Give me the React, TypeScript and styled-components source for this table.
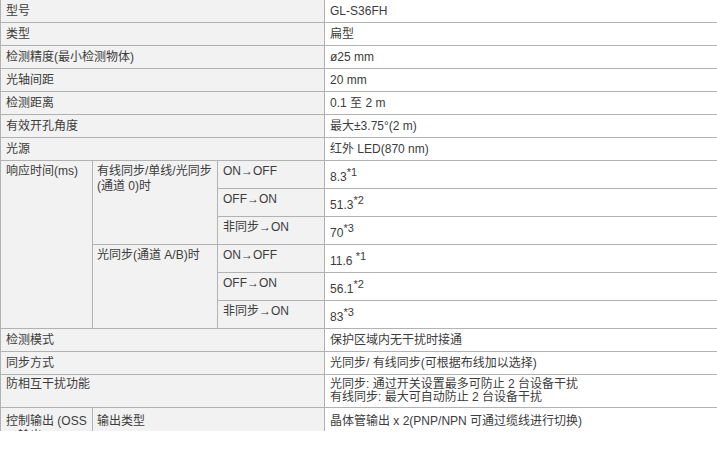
import styled, { createGlobalStyle } from "styled-components";

const GlobalStyle = createGlobalStyle`
body {
  margin: 0;
  background: #ffffff;
}
`

const Frame = styled.div`
width: 717px;
height: 431px;
overflow: hidden;
background: #ffffff;
`

const SpecTable = styled.table`
width: 780px;
table-layout: fixed;
border-collapse: collapse;
font-family: "Liberation Sans", Arial, "Noto Sans CJK SC", sans-serif;
font-size: 12px;
color: #3c3c3c;
tr:first-child td {
  border-top: none;
}
`

const Label = styled.td<{ $top?: boolean; $tall?: boolean }>`
background: #f2f2f2;
border: 1px solid #b2b2b2;
padding: 3px 4px 3px 5px;
line-height: ${p => (p.$tall ? "15px" : "13px")};
height: ${p => (p.$tall ? "21px" : "16px")};
vertical-align: ${p => (p.$top ? "top" : "middle")};
word-break: break-all;
`

const GroupLabel = styled(Label)`
padding-left: 4px;
padding-right: 2px;
word-break: normal;
`

const Value = styled.td<{ $top?: boolean; $tall?: boolean }>`
background: #ffffff;
border: 1px solid #b2b2b2;
border-right: none;
padding: ${p => (p.$tall ? "10px 5px 3px" : "3px 5px")};
line-height: 13px;
height: ${p => (p.$tall ? "14px" : "16px")};
vertical-align: ${p => (p.$top ? "top" : "middle")};
`

const OutputRow = styled.tr`
td {
  padding-top: 6px;
  line-height: 15px;
}
`

const Note = styled.sup`
font-size: 11px;
line-height: 0;
vertical-align: 5px;
`

const simpleRows: [string, string][] = [
    ["型号", "GL-S36FH"],
    ["类型", "扁型"],
    ["检测精度(最小检测物体)", "ø25 mm"],
    ["光轴间距", "20 mm"],
    ["检测距离", "0.1 至 2 m"],
    ["有效开孔角度", "最大±3.75°(2 m)"],
    ["光源", "红外 LED(870 nm)"],
]

const responseGroups = [
    {
        name: "有线同步/单线/光同步(通道 0)时",
        items: [
            ["ON→OFF", "8.3", "*1"],
            ["OFF→ON", "51.3", "*2"],
            ["非同步→ON", "70", "*3"],
        ],
    },
    {
        name: "光同步(通道 A/B)时",
        items: [
            ["ON→OFF", "11.6 ", "*1"],
            ["OFF→ON", "56.1", "*2"],
            ["非同步→ON", "83", "*3"],
        ],
    },
]

const App = () => {
    return (
        <>
            <GlobalStyle />
            <Frame>
                <SpecTable>
                    <colgroup>
                        <col style={{ width: 92 }} />
                        <col style={{ width: 125 }} />
                        <col style={{ width: 107 }} />
                        <col />
                    </colgroup>
                    <tbody>
                        {simpleRows.map(([k, v]) => (
                            <tr key={k}>
                                <Label colSpan={3}>{k}</Label>
                                <Value>{v}</Value>
                            </tr>
                        ))}

                        {responseGroups.map((g, gi) =>
                            g.items.map(([mode, num, note], i) => (
                                <tr key={g.name + mode}>
                                    {gi === 0 && i === 0 && (
                                        <Label rowSpan={6} $top $tall>响应时间(ms)</Label>
                                    )}
                                    {i === 0 && (
                                        <GroupLabel rowSpan={3} $top $tall>{g.name}</GroupLabel>
                                    )}
                                    <Label $top $tall>{mode}</Label>
                                    <Value $top $tall>
                                        {num}
                                        <Note>{note}</Note>
                                    </Value>
                                </tr>
                            ))
                        )}

                        <tr>
                            <Label colSpan={3}>检测模式</Label>
                            <Value>保护区域内无干扰时接通</Value>
                        </tr>
                        <tr>
                            <Label colSpan={3}>同步方式</Label>
                            <Value>光同步/ 有线同步(可根据布线加以选择)</Value>
                        </tr>
                        <tr>
                            <Label colSpan={3} $top>防相互干扰功能</Label>
                            <Value>
                                光同步: 通过开关设置最多可防止 2 台设备干扰
                                <br />
                                有线同步: 最大可自动防止 2 台设备干扰
                            </Value>
                        </tr>
                        <OutputRow>
                            <Label $top>控制输出 (OSSD 输出)</Label>
                            <GroupLabel colSpan={2} $top>输出类型</GroupLabel>
                            <Value $top>晶体管输出 x 2(PNP/NPN 可通过缆线进行切换)</Value>
                        </OutputRow>
                    </tbody>
                </SpecTable>
            </Frame>
        </>
    )
}
export default App
